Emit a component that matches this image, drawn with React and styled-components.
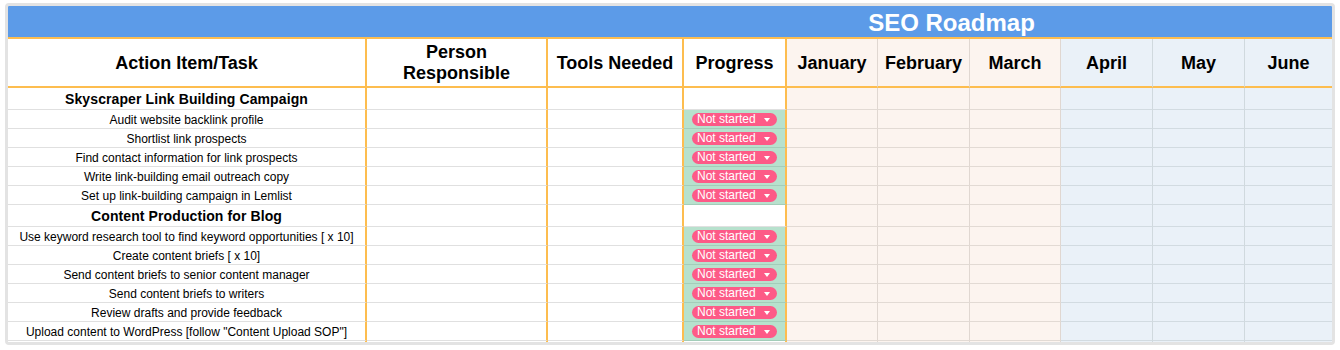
import React from "react";
import styled, { createGlobalStyle } from "styled-components";

const GlobalStyle = createGlobalStyle`
  html, body { margin: 0; padding: 0; background: #ffffff; }
  body { font-family: "Liberation Sans", Arial, sans-serif; color: #000; }
`;

const COLS = "359px 181px 136px 103px 91px 92px 91px 92px 92px 1fr";

const ORANGE = "#fdbd4f";

const TONES = {
  white: { bg: "#ffffff", line: "#e0e0e0", vline: "#e0e0e0" },
  green: { bg: "#b7e1cd", line: "#a3cdb9", vline: "#a3cdb9" },
  peach: { bg: "#fcf4ef", line: "#e2dad4", vline: "#e0d7d1" },
  blue: { bg: "#eaf1f8", line: "#d2dbe1", vline: "#d0d9de" },
};

const Page = styled.div`
  padding: 3px 5px;
`;

const Frame = styled.div`
  width: 1330px;
  height: 342px;
  box-sizing: border-box;
  border: 3px solid #e3e3e3;
  border-radius: 4px;
  overflow: hidden;
  background: #ffffff;
`;

const TitleBar = styled.div`
  box-sizing: border-box;
  height: 33px;
  padding: 3px 0 0 563px;
  background: #5c9be8;
  border-bottom: 2px solid ${ORANGE};
  display: flex;
  align-items: center;
  justify-content: center;
`;

const Title = styled.h1`
  margin: 0;
  font-size: 24px;
  line-height: 1;
  font-weight: 700;
  color: #ffffff;
`;

const Row = styled.div`
  display: grid;
  grid-template-columns: ${COLS};
  height: ${(p) => p.$height}px;
`;

const Cell = styled.div`
  box-sizing: border-box;
  min-width: 0;
  display: flex;
  align-items: center;
  justify-content: center;
  text-align: center;
  padding-top: ${(p) => p.$padTop || 0}px;
  background: ${(p) => TONES[p.$tone].bg};
  border-bottom: ${(p) =>
    p.$bottom === "orange" ? `2px solid ${ORANGE}` : `1px solid ${TONES[p.$tone].line}`};
  border-right: ${(p) =>
    p.$edge === "orange"
      ? `2px solid ${ORANGE}`
      : p.$edge === "grid"
      ? `1px solid ${TONES[p.$tone].vline}`
      : "none"};
  white-space: nowrap;
  overflow: hidden;
`;

const HeadLabel = styled.span`
  font-size: 18px;
  font-weight: 700;
  line-height: 21px;
  white-space: normal;
`;

const SectionLabel = styled.span`
  font-size: 14px;
  font-weight: 700;
  letter-spacing: 0.1px;
`;

const ItemLabel = styled.span`
  font-size: 12px;
  font-weight: 400;
`;

const Badge = styled.span`
  box-sizing: border-box;
  width: 85px;
  height: 13px;
  border-radius: 7px;
  background: #fd5a87;
  color: #ffffff;
  font-size: 12px;
  line-height: 13px;
  display: inline-flex;
  align-items: center;
  justify-content: space-between;
  padding: 0 7px 0 5px;
`;

const Caret = styled.span`
  width: 0;
  height: 0;
  border-left: 3.5px solid transparent;
  border-right: 3.5px solid transparent;
  border-top: 4px solid #ffffff;
`;

const MONTHS = [
  { name: "January", tone: "peach" },
  { name: "February", tone: "peach" },
  { name: "March", tone: "peach" },
  { name: "April", tone: "blue" },
  { name: "May", tone: "blue" },
  { name: "June", tone: "blue" },
];

const ROWS = [
  { type: "section", text: "Skyscraper Link Building Campaign" },
  { type: "item", text: "Audit website backlink profile" },
  { type: "item", text: "Shortlist link prospects" },
  { type: "item", text: "Find contact information for link prospects" },
  { type: "item", text: "Write link-building email outreach copy" },
  { type: "item", text: "Set up link-building campaign in Lemlist" },
  { type: "section", text: "Content Production for Blog" },
  { type: "item", text: "Use keyword research tool to find keyword opportunities [ x 10]" },
  { type: "item", text: "Create content briefs [ x 10]" },
  { type: "item", text: "Send content briefs to senior content manager" },
  { type: "item", text: "Send content briefs to writers" },
  { type: "item", text: "Review drafts and provide feedback" },
  { type: "item", text: 'Upload content to WordPress [follow "Content Upload SOP"]' },
  { type: "blank", text: "" },
];

function MonthCells({ bottom, header, padTop }) {
  return MONTHS.map((m, i) => (
    <Cell
      key={m.name}
      $tone={m.tone}
      $bottom={bottom}
      $padTop={padTop}
      $edge={i === MONTHS.length - 1 ? "none" : "grid"}
    >
      {header && <HeadLabel>{m.name}</HeadLabel>}
    </Cell>
  ));
}

function HeaderRow() {
  return (
    <Row $height={49}>
      <Cell $tone="white" $bottom="orange" $edge="orange" $padTop={2}>
        <HeadLabel>Action Item/Task</HeadLabel>
      </Cell>
      <Cell $tone="white" $bottom="orange" $edge="orange" $padTop={1}>
        <HeadLabel>
          Person
          <br />
          Responsible
        </HeadLabel>
      </Cell>
      <Cell $tone="white" $bottom="orange" $edge="orange" $padTop={2}>
        <HeadLabel>Tools Needed</HeadLabel>
      </Cell>
      <Cell $tone="white" $bottom="orange" $edge="orange" $padTop={2}>
        <HeadLabel>Progress</HeadLabel>
      </Cell>
      <MonthCells bottom="orange" header padTop={2} />
    </Row>
  );
}

function BodyRow({ row }) {
  const isItem = row.type === "item";
  const isSection = row.type === "section";
  const pad = isItem ? 1 : 0;
  return (
    <Row $height={isSection ? 22 : 19}>
      <Cell $tone="white" $edge="orange" $padTop={pad}>
        {isSection && <SectionLabel>{row.text}</SectionLabel>}
        {isItem && <ItemLabel>{row.text}</ItemLabel>}
      </Cell>
      <Cell $tone="white" $edge="orange" />
      <Cell $tone="white" $edge="orange" />
      <Cell $tone={isItem ? "green" : "white"} $edge="orange" $padTop={pad}>
        {isItem && (
          <Badge>
            Not started
            <Caret />
          </Badge>
        )}
      </Cell>
      <MonthCells />
    </Row>
  );
}

export default function App() {
  return (
    <Page>
      <GlobalStyle />
      <Frame>
        <TitleBar>
          <Title>SEO Roadmap</Title>
        </TitleBar>
        <HeaderRow />
        {ROWS.map((row, i) => (
          <BodyRow key={i} row={row} />
        ))}
      </Frame>
    </Page>
  );
}
